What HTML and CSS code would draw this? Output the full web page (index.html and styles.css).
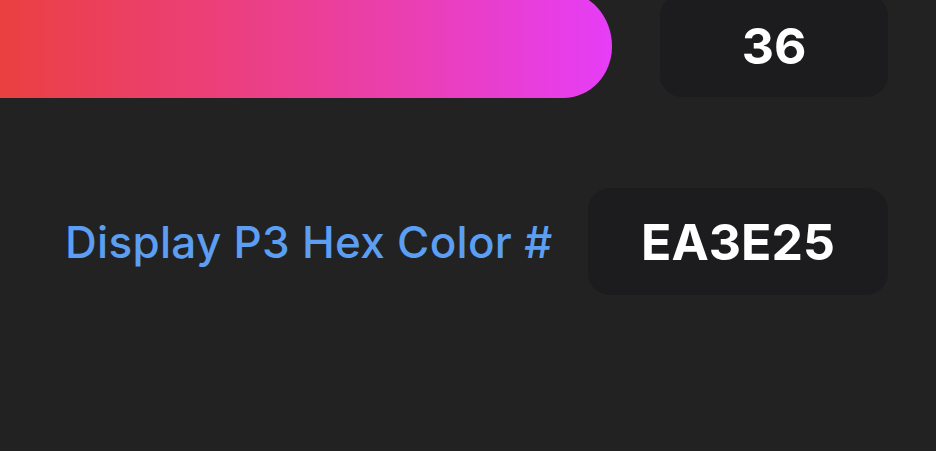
FILE: index.html
```html
<!DOCTYPE html>
<html>
<head>
<meta charset="utf-8">
<link rel="stylesheet" href="styles.css">
</head>
<body>
<div class="page">
  <div class="row row-top">
    <div class="bar"></div>
    <div class="box box-small">36</div>
  </div>
  <div class="row row-hex">
    <div class="label">Display P3 Hex Color #</div>
    <div class="box box-wide">EA3E25</div>
  </div>
</div>
</body>
</html>
```

FILE: styles.css
```css
html, body {
  margin: 0;
  padding: 0;
  background: #222222;
  width: 936px;
  height: 451px;
  overflow: hidden;
}
.page {
  display: flex;
  flex-direction: column;
  font-family: Inter, "Liberation Sans", sans-serif;
}
.row {
  display: flex;
  align-items: center;
}
.row-top {
  margin-top: -8px;
  align-items: flex-start;
}
.bar {
  width: 612px;
  height: 106px;
  border-radius: 0 50px 50px 0 / 0 56px 53px 0;
  background: linear-gradient(90deg, #ea4040 0%, #ec3f7a 35%, #ea3fb8 70%, #e63df8 100%);
}
.box {
  background: #1c1c1e;
  border-radius: 22px;
  color: #ffffff;
  font-weight: 700;
  font-size: 50px;
  display: flex;
  align-items: center;
  justify-content: center;
}
.box-small {
  margin-left: 48px;
  margin-top: 2px;
  width: 228px;
  height: 103px;
}
.row-hex {
  margin-top: 90px;
}
.label {
  margin-left: 65px;
  flex: 1;
  color: #5c9ef2;
  font-size: 44px;
  font-weight: 500;
  letter-spacing: 0.3px;
}
.box-wide {
  width: 300px;
  height: 107px;
  margin-right: 48px;
}
```
